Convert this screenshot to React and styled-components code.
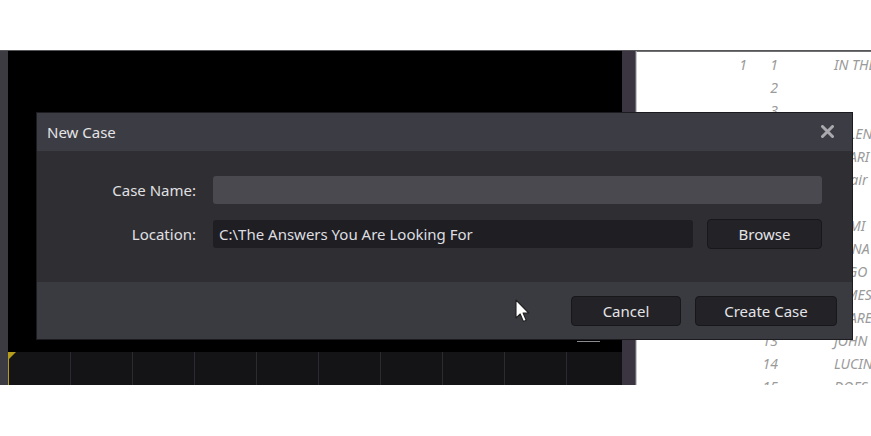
import React from "react";
import styled, { createGlobalStyle } from "styled-components";

const docRows = [
  { page: "1", line: "1", text: "IN THE" },
  { line: "2", text: "" },
  { line: "3", text: "" },
  { line: "4", text: "ALLEN" },
  { line: "5", text: "CLARI" },
  { line: "6", text: "Chair" },
  { line: "7", text: "." },
  { line: "8", text: "SAMI" },
  { line: "9", text: "ANNA" },
  { line: "10", text: "DIGO" },
  { line: "11", text: "JAMES" },
  { line: "12", text: "CLARE" },
  { line: "13", text: "JOHN" },
  { line: "14", text: "LUCINDA" },
  { line: "15", text: "DOES" },
];

const App = () => {
  return (
    <>
      <GlobalStyle />
      <Page>
        <AppFrame>
          <SideStrip />
          <Workspace>
            <Viewer />
            <Timeline>
              <Playhead />
            </Timeline>
            <ScrollTick />
          </Workspace>
          <Splitter />
          <DocPanel>
            {docRows.map((row) => (
              <DocRow key={row.line}>
                <PageNo>{row.page}</PageNo>
                <LineNo>{row.line}</LineNo>
                <LineText>{row.text}</LineText>
              </DocRow>
            ))}
          </DocPanel>

          <Dialog>
            <DialogHeader>
              <span>New Case</span>
              <CloseButton aria-label="Close">
                <svg width="13" height="13" viewBox="0 0 13 13">
                  <path
                    d="M1.5 1.5 L11.5 11.5 M11.5 1.5 L1.5 11.5"
                    stroke="#a9a9ae"
                    strokeWidth="3"
                    strokeLinecap="round"
                  />
                </svg>
              </CloseButton>
            </DialogHeader>
            <DialogBody>
              <FieldLabel>Case Name:</FieldLabel>
              <TextField $tone="light" $span />
              <FieldLabel>Location:</FieldLabel>
              <TextField $tone="dark">C:\The Answers You Are Looking For</TextField>
              <ActionButton $width="115px">Browse</ActionButton>
            </DialogBody>
            <DialogFooter>
              <ActionButton $width="110px">Cancel</ActionButton>
              <ActionButton $width="142px">Create Case</ActionButton>
            </DialogFooter>
          </Dialog>

          <Pointer width="16" height="25" viewBox="0 0 16 25">
            <path
              d="M1 1 L1 19 L5.2 15 L8.4 22.5 L11.2 21.3 L8.1 14 L13.8 14 Z"
              fill="#ffffff"
              stroke="#222"
              strokeWidth="1.1"
              strokeLinejoin="round"
            />
          </Pointer>
        </AppFrame>
      </Page>
    </>
  );
};

const GlobalStyle = createGlobalStyle`
  html, body {
    margin: 0;
    padding: 0;
    background: #ffffff;
    font-family: "Noto Sans", "Open Sans", sans-serif;
  }
`;

const Page = styled.div`
  width: 871px;
  height: 436px;
  padding-top: 50px;
  box-sizing: border-box;
  background: #ffffff;
  overflow: hidden;
`;

const AppFrame = styled.div`
  position: relative;
  display: flex;
  height: 335px;
  border-top: 1px solid #55555a;
  box-sizing: border-box;
`;

const SideStrip = styled.div`
  width: 8px;
  background: #3b3b41;
`;

const Workspace = styled.div`
  position: relative;
  width: 614px;
  display: flex;
  flex-direction: column;
  background: #000000;
`;

const Viewer = styled.div`
  flex: 1;
  background: #000000;
`;

const Timeline = styled.div`
  position: relative;
  height: 33px;
  background-color: #141416;
  background-image: repeating-linear-gradient(
    to right,
    transparent 0px,
    transparent 61px,
    #2b2b30 61px,
    #2b2b30 62px
  );
  border-left: 1px solid #b59c1c;
`;

const Playhead = styled.div`
  position: absolute;
  left: 0;
  top: 0;
  width: 0;
  height: 0;
  border-top: 7px solid #b59c1c;
  border-right: 7px solid transparent;
`;

const ScrollTick = styled.div`
  position: absolute;
  left: 569px;
  top: 290px;
  width: 23px;
  height: 1px;
  background: #8a8a90;
`;

const Splitter = styled.div`
  width: 13px;
  background: #3a3540;
  border-right: 1px solid #6a6670;
`;

const DocPanel = styled.div`
  flex: 1;
  background: #ffffff;
  border-left: 1px solid #c8c8c8;
  border-top: 1px solid #707070;
  padding-top: 1px;
  overflow: hidden;
`;

const DocRow = styled.div`
  display: grid;
  grid-template-columns: 110px 31px 1fr;
  height: 23px;
  line-height: 23px;
  font-size: 14px;
  font-style: italic;
  color: #9a9a9a;
  white-space: nowrap;
`;

const PageNo = styled.span`
  text-align: right;
`;

const LineNo = styled.span`
  text-align: right;
`;

const LineText = styled.span`
  padding-left: 56px;
`;

const Dialog = styled.div`
  position: absolute;
  left: 36px;
  top: 61px;
  width: 817px;
  height: 228px;
  display: flex;
  flex-direction: column;
  background: #2e2e33;
  border: 1px solid #1c1c20;
  box-sizing: border-box;
  color: #e4e4e6;
  font-size: 15px;
`;

const DialogHeader = styled.div`
  height: 37px;
  display: flex;
  align-items: center;
  justify-content: space-between;
  padding: 0 18px 1px 10px;
  background: #3c3c44;
`;

const CloseButton = styled.button`
  display: flex;
  padding: 0;
  border: none;
  background: none;
`;

const DialogBody = styled.div`
  flex: 1;
  display: grid;
  grid-template-columns: 159px 1fr 115px;
  grid-auto-rows: 28px;
  column-gap: 14px;
  row-gap: 16px;
  align-items: center;
  padding: 25px 30px 0 0;
`;

const FieldLabel = styled.div`
  text-align: right;
  color: #e0e0e2;
`;

const TextField = styled.div`
  grid-column: ${(p) => (p.$span ? "2 / 4" : "auto")};
  height: 28px;
  line-height: 28px;
  padding: 0 6px;
  margin-left: 3px;
  border-radius: 3px;
  background: ${(p) => (p.$tone === "light" ? "#49494f" : "#1f1f23")};
  color: #dedee0;
  white-space: nowrap;
`;

const ActionButton = styled.button`
  width: ${(p) => p.$width};
  height: 30px;
  border: 1px solid #18181b;
  border-radius: 4px;
  background: #222227;
  color: #e4e4e6;
  font-family: "Noto Sans", "Open Sans", sans-serif;
  font-size: 15px;
  cursor: default;
`;

const DialogFooter = styled.div`
  height: 57px;
  display: flex;
  justify-content: flex-end;
  align-items: flex-start;
  gap: 14px;
  padding: 14px 15px 0 0;
  box-sizing: border-box;
  background: #3a3a41;
`;

const Pointer = styled.svg`
  position: absolute;
  left: 515px;
  top: 248px;
`;

export default App;
